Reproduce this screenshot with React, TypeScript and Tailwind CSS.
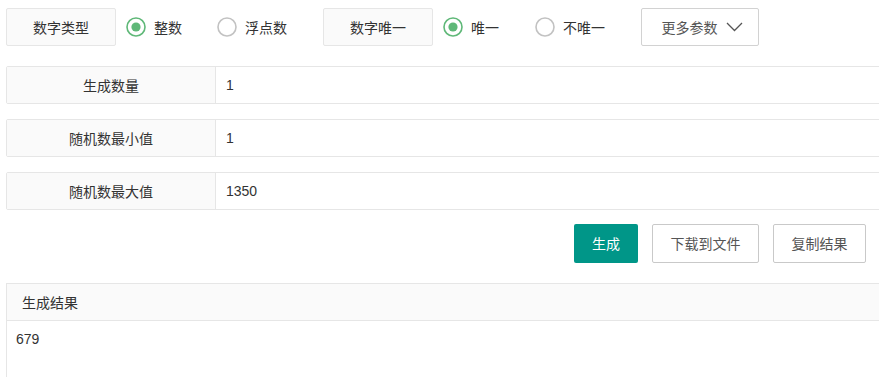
const cjk = "font-['Microsoft_YaHei','Noto_Sans_CJK_SC',sans-serif]";

function Radio({ label, checked, gap = "mr-[36px]" }: { label: string; checked?: boolean; gap?: string }) {
  return (
    <div className={`${gap} flex items-center`}>
      <svg width="20" height="20" viewBox="0 0 20 20" className="mr-[8px]">
        <circle
          cx="10"
          cy="10"
          r="9"
          fill="white"
          stroke={checked ? "#5FB878" : "#c2c2c2"}
          strokeWidth="1.6"
        />
        {checked && <circle cx="10" cy="10" r="4.6" fill="#5FB878" />}
      </svg>
      <span className="text-[14px] text-[#333]">{label}</span>
    </div>
  );
}

function FieldRow({ label, value }: { label: string; value: string }) {
  return (
    <div className="-mr-4 flex h-[38px] rounded-[2px] border border-[#e6e6e6]">
      <div className="flex w-[209px] items-center justify-center border-r border-[#e6e6e6] bg-[#fafafa] text-[14px] text-[#333]">
        {label}
      </div>
      <div className="flex flex-1 items-center bg-white pl-[10px] font-['Liberation_Sans',Arial,sans-serif] text-[14px] text-[#333]">
        {value}
      </div>
    </div>
  );
}

export default function App() {
  return (
    <div className={`h-[377px] w-[879px] overflow-hidden bg-white pl-[6px] ${cjk}`}>
      {/* top options */}
      <div className="mt-[8px] flex h-[38px] items-center">
        <div className="mr-[10px] flex h-[38px] w-[110px] items-center justify-center rounded-[2px] border border-[#e6e6e6] bg-[#fafafa] text-[14px] text-[#333]">
          数字类型
        </div>
        <Radio label="整数" checked gap="mr-[35px]" />
        <Radio label="浮点数" />
        <div className="mr-[10px] flex h-[38px] w-[110px] items-center justify-center rounded-[2px] border border-[#e6e6e6] bg-[#fafafa] text-[14px] text-[#333]">
          数字唯一
        </div>
        <Radio label="唯一" checked />
        <Radio label="不唯一" />
        <button className="flex h-[38px] w-[118px] items-center justify-center gap-[8px] rounded-[2px] border border-[#d2d2d2] bg-white pl-[4px] text-[14px] text-[#555]">
          更多参数
          <svg width="17" height="10" viewBox="0 0 17 10" fill="none">
            <polyline points="1,1 8.5,8.5 16,1" stroke="#555" strokeWidth="1.3" />
          </svg>
        </button>
      </div>

      {/* fields */}
      <div className="mt-[20px] flex flex-col gap-[15px]">
        <FieldRow label="生成数量" value="1" />
        <FieldRow label="随机数最小值" value="1" />
        <FieldRow label="随机数最大值" value="1350" />
      </div>

      {/* actions */}
      <div className="mt-[14px] flex justify-end gap-[14px] pr-[13px]">
        <button className="h-[39px] w-[64px] rounded-[2px] bg-[#009688] text-[14px] text-white">
          生成
        </button>
        <button className="h-[39px] w-[107px] rounded-[2px] border border-[#c9c9c9] bg-white text-[14px] text-[#555]">
          下载到文件
        </button>
        <button className="h-[39px] w-[93px] rounded-[2px] border border-[#c9c9c9] bg-white text-[14px] text-[#555]">
          复制结果
        </button>
      </div>

      {/* result */}
      <div className="-mr-4 mt-[20px] border border-[#e6e6e6]">
        <div className="flex h-[37px] items-center border-b border-[#e6e6e6] bg-[#fafafa] pl-[15px] text-[14px] text-[#333]">
          生成结果
        </div>
        <div className="h-[80px] px-[9px] pt-[8px] font-['Liberation_Sans',Arial,sans-serif] text-[14px] text-[#333]">
          679
        </div>
      </div>
    </div>
  );
}
